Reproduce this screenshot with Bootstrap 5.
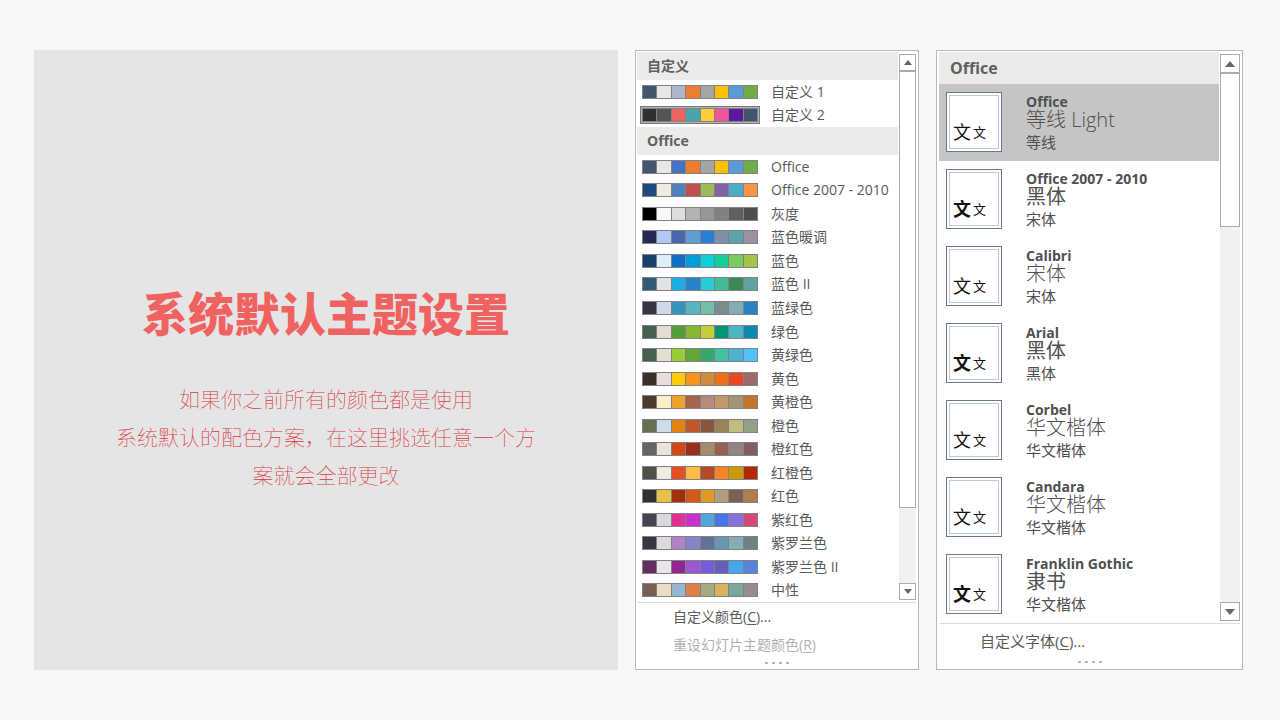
<!DOCTYPE html>
<html lang="zh-CN">
<head>
<meta charset="utf-8">
<meta name="viewport" content="width=device-width, initial-scale=1">
<title>系统默认主题设置</title>
<link href="https://cdn.jsdelivr.net/npm/bootstrap@5.3.0/dist/css/bootstrap.min.css" rel="stylesheet">
<style>
  body { background: #f8f8f8; font-family: "Open Sans", "Noto Sans CJK SC", sans-serif; color: #595959; }
  .stage { display: grid; grid-template-columns: 584fr 284fr 307fr; gap: 17px; min-height: 100vh; padding: 50px 37px 50px 34px; }
  .intro { background: #e5e5e5; padding-top: 54px; color: #f0625f; }
  .intro h1 { font: 900 46px/60px "Noto Sans CJK SC", sans-serif; margin: 0 0 38px; }
  .intro p { font: 100 21px/38px "Noto Sans CJK SC", sans-serif; max-width: 430px; color: #d93840; margin: 0; }
  .picker { background: #fff; border: 1px solid #b9b9b9; padding: 1px 2px 0 1px; min-width: 0; }
  .group-title { background: #ebebeb; font-size: 14px; line-height: 28px; font-weight: 700; padding-left: 10px; margin: 0; flex: none; color: #606060; }
  .pick { border: 0; background: none; color: inherit; text-align: left; padding: 0; }
  .scheme { font-size: 14px; line-height: 18px; padding-left: 5px; gap: 13px; flex: 1 1 0; }
  .swatches { display: grid; grid-template-columns: repeat(8, 1fr); gap: 1px; width: 116px; height: 14px; padding: 1px; background: #808285; flex: none; }
  .scheme.chosen .swatches { box-shadow: 0 0 0 1px #b4b4b4, 0 0 0 2px #777; }
  .scroller { width: 17px; margin: 2px 0; background: #f1f1f1; flex: none; }
  .scroller button { height: 17px; border: 1px solid #ababab; background: #fff; padding: 0; display: flex; align-items: center; justify-content: center; }
  .grip { background: #fff; border: 1px solid #ababab; }
  .colors .grip { flex: 437 1 0; }
  .colors .rest { flex: 75 1 0; }
  .colors .scroller { margin-left: 1px; }
  .menu-foot { border-top: 1px solid #dcdcdc; margin-left: 1px; }
  .menu-foot .pick { padding-left: 35px; line-height: 28px; font-size: 14px; }
  .menu-foot u { text-underline-offset: 2px; }
  .menu-foot .pick:disabled { color: #b0b0b0; }
  .dots { height: 10px; gap: 4px; padding-top: 3px; }
  .dots i { width: 3px; height: 2px; border-radius: 1px; background: #ababab; }
  .fonts { padding-left: 2px; padding-right: 2px; }
  .fonts .group-title { font-size: 16px; line-height: 32px; padding-left: 11px; }
  .fonts .scroller { width: 20px; margin: 2px 0 2px 1px; }
  .fonts .scroller button { height: 19px; }
  .fonts .grip { flex: 153 1 0; }
  .fonts .rest { flex: 376 1 0; }
  .fonts .menu-foot .pick { padding-left: 40px; line-height: 34px; font-size: 15px; }
  .fonts .dots { height: 11px; }
  .fontset { padding: 8px 0 0 7px; gap: 24px; flex: 1 1 0; color: #505050; }
  .fontset.chosen { background: #c5c5c5; }
  .sample { width: 56px; height: 60px; border: 1px solid #6c7789; background: #fff; padding: 2px; flex: none; }
  .sample span { height: 100%; border: 1px solid #bcc8dc; padding: 0 0 6px 3px; color: #111; gap: 2px; line-height: 20px; }
  .sample b { font-size: 18px; font-weight: inherit; }
  .sample em { font-size: 13px; font-style: normal; }
  .heavy b { font-weight: 700; }
  .fontset strong { font-size: 14px; line-height: 16px; margin-top: 2px; }
  .head-face { font-size: 20px; line-height: 20px; font-weight: 300; }
  .heavy .head-face { font-weight: 400; }
  .body-face { font-size: 15px; line-height: 24px; }
</style>
</head>
<body>
<main class="stage">
  <section class="intro d-flex flex-column justify-content-center align-items-center text-center">
    <h1>系统默认主题设置</h1>
    <p>如果你之前所有的颜色都是使用<br>系统默认的配色方案，在这里挑选任意一个方案就会全部更改</p>
  </section>

  <section class="picker colors d-flex flex-column" aria-label="主题颜色">
    <div class="d-flex flex-fill">
      <div class="d-flex flex-column flex-fill" id="schemes"></div>
      <div class="scroller d-flex flex-column">
        <button type="button" aria-label="向上滚动"><svg width="8" height="5"><path d="M0 5L4 0L8 5Z" fill="#666"/></svg></button>
        <div class="grip"></div><div class="rest"></div>
        <button type="button" aria-label="向下滚动"><svg width="8" height="5"><path d="M0 0L4 5L8 0Z" fill="#666"/></svg></button>
      </div>
    </div>
    <div class="menu-foot d-flex flex-column">
      <button type="button" class="pick">自定义颜色(<u>C</u>)...</button>
      <button type="button" class="pick" disabled>重设幻灯片主题颜色(<u>R</u>)</button>
      <div class="dots d-flex justify-content-center"><i></i><i></i><i></i><i></i></div>
    </div>
  </section>

  <section class="picker fonts d-flex flex-column" aria-label="主题字体">
    <div class="d-flex flex-fill">
      <div class="d-flex flex-column flex-fill" id="fontsets"><h2 class="group-title">Office</h2></div>
      <div class="scroller d-flex flex-column">
        <button type="button" aria-label="向上滚动"><svg width="10" height="6"><path d="M0 6L5 0L10 6Z" fill="#666"/></svg></button>
        <div class="grip"></div><div class="rest"></div>
        <button type="button" aria-label="向下滚动"><svg width="10" height="6"><path d="M0 0L5 6L10 0Z" fill="#666"/></svg></button>
      </div>
    </div>
    <div class="menu-foot d-flex flex-column">
      <button type="button" class="pick">自定义字体(<u>C</u>)...</button>
      <div class="dots d-flex justify-content-center"><i></i><i></i><i></i><i></i></div>
    </div>
  </section>
</main>
<script>
  const groups = [
    ["自定义", [
      ["自定义 1", "44546A E7E6E6 ADB9CA ED7D31 A5A5A5 FFC000 5B9BD5 70AD47"],
      ["自定义 2", "303030 555555 EF6461 48A5A8 FFCD3C F2559A 5A189A 44546A", true]]],
    ["Office", [
      ["Office", "44546A E7E6E6 4472C4 ED7D31 A5A5A5 FFC000 5B9BD5 70AD47"],
      ["Office 2007 - 2010", "1F497D EEECE1 4F81BD C0504D 9BBB59 8064A2 4BACC6 F79646"],
      ["灰度", "000000 F8F8F8 DDDDDD B2B2B2 969696 808080 5F5F5F 4D4D4D"],
      ["蓝色暖调", "242852 ACCBF9 4A66AC 629DD1 297FD5 7F8FA9 5AA2AE 9D90A0"],
      ["蓝色", "17406D DBEFF9 0F6FC6 009DD9 0BD0D9 10CF9B 7CCA62 A5C249"],
      ["蓝色 II", "335B74 DFE3E5 1CADE4 2683C6 27CED7 42BA97 3E8853 62A39F"],
      ["蓝绿色", "373545 CEDBE6 3494BA 58B6C0 75BDA7 7A8C8E 84ACB6 2683C6"],
      ["绿色", "455F51 E3DED1 549E39 8AB833 C0CF3A 029676 4AB5C4 0989B1"],
      ["黄绿色", "455F51 E2DFCC 99CB38 63A537 37A76F 44C1A3 4EB3CF 51C3F9"],
      ["黄色", "39302A E5DEDB FFCA08 F8931D CE8D3E EC7016 E64823 9C6A6A"],
      ["黄橙色", "4E3B30 FBEEC9 F0A22E A5644E B58B80 C3986D A19574 C17529"],
      ["橙色", "637052 CCDDEA E48312 BD582C 865640 9B8357 C2BC80 94A088"],
      ["橙红色", "696464 E9E5DC D34817 9B2D1F A28E6A 956251 918485 855D5D"],
      ["红橙色", "505046 EEECE1 E84C22 FFBD47 B64926 FF8427 CC9900 B22600"],
      ["红色", "323232 E5C243 A5300F D55816 E19825 B19C7D 7F5F52 B27D49"],
      ["紫红色", "454551 D8D9DC E32D91 C830CC 4EA6DC 4775E7 8971E1 D54773"],
      ["紫罗兰色", "373545 DCD8DC AD84C6 8784C7 5D739A 6997AF 84ACB6 6F8183"],
      ["紫罗兰色 II", "632E62 EAE5EB 92278F 9B57D3 755DD9 665EB8 45A5ED 5982DB"],
      ["中性", "775F55 EBDDC3 94B6D2 DD8047 A5AB81 D8B25C 7BA79D 968C8C"]]]
  ];
  document.getElementById("schemes").innerHTML = groups.map(([title, rows]) =>
    `<h2 class="group-title">${title}</h2>` + rows.map(([name, colors, chosen]) =>
      `<button type="button" class="pick scheme d-flex align-items-center${chosen ? " chosen" : ""}"><span class="swatches">${
        colors.split(" ").map(c => `<span style="background:#${c}"></span>`).join("")
      }</span><span class="text-nowrap">${name}</span></button>`).join("")).join("");

  const fontsets = [
    ["Office", "等线 Light", "等线", "chosen"],
    ["Office 2007 - 2010", "黑体", "宋体", "heavy"],
    ["Calibri", "宋体", "宋体", ""],
    ["Arial", "黑体", "黑体", "heavy"],
    ["Corbel", "华文楷体", "华文楷体", ""],
    ["Candara", "华文楷体", "华文楷体", ""],
    ["Franklin Gothic", "隶书", "华文楷体", "heavy"]
  ];
  document.getElementById("fontsets").insertAdjacentHTML("beforeend", fontsets.map(([name, head, body, kind]) =>
    `<button type="button" class="pick fontset d-flex align-items-start ${kind}"><span class="sample"><span class="d-flex align-items-end"><b>文</b><em>文</em></span></span><span class="d-flex flex-column"><strong>${name}</strong><span class="head-face">${head}</span><span class="body-face">${body}</span></span></button>`).join(""));
</script>
<script src="https://cdn.jsdelivr.net/npm/bootstrap@5.3.0/dist/js/bootstrap.bundle.min.js"></script>
</body>
</html>
